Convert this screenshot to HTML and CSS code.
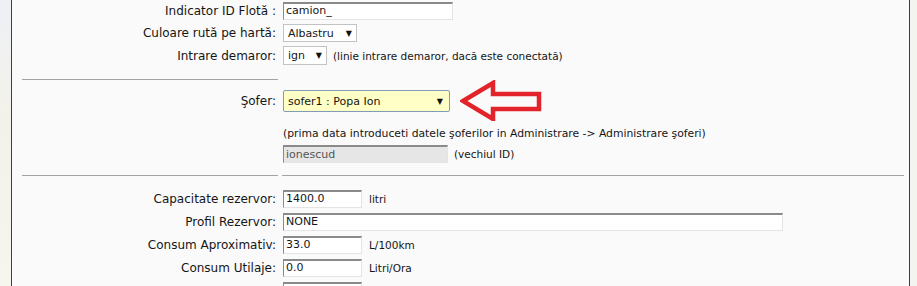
FILE: index.html
```html
<!DOCTYPE html>
<html lang="ro">
<head>
<meta charset="utf-8">
<title>Editare vehicul</title>
<link rel="stylesheet" href="styles.css">
</head>
<body>
<div class="side"></div>
<div class="frame">
  <div class="form">
    <div class="row r1">
      <div class="lbl">Indicator ID Flotă :</div>
      <div class="val"><input class="txt w-id" type="text" value="camion_"></div>
    </div>
    <div class="row r2">
      <div class="lbl">Culoare rută pe hartă:</div>
      <div class="val"><span class="sel w-color"><span class="opt">Albastru</span><span class="caret">▼</span></span></div>
    </div>
    <div class="row r3">
      <div class="lbl">Intrare demaror:</div>
      <div class="val"><span class="sel w-ign"><span class="opt">ign</span><span class="caret">▼</span></span><span class="note">(linie intrare demaror, dacă este conectată)</span></div>
    </div>

    <div class="sep sep-left"><hr class="rule"></div>

    <div class="row rsofer">
      <div class="lbl">Şofer:</div>
      <div class="val">
        <span class="sel sel-sofer"><span class="opt">sofer1 : Popa Ion</span><span class="caret">▼</span></span>
        <svg class="arrow" width="82" height="41" viewBox="0 0 82 41" aria-hidden="true">
          <path d="M3 21 L33 3 L33 14 L79 14 L79 29 L33 29 L33 39 Z" fill="none" stroke="#e2232a" stroke-width="4.5" stroke-linejoin="miter"/>
        </svg>
      </div>
    </div>
    <div class="row rhint">
      <div class="lbl"></div>
      <div class="val"><span class="hint">(prima data introduceti datele şoferilor in Administrare -&gt; Administrare şoferi)</span></div>
    </div>
    <div class="row rold">
      <div class="lbl"></div>
      <div class="val"><input class="txt txt-off w-old" type="text" value="ionescud" disabled><span class="note">(vechiul ID)</span></div>
    </div>

    <div class="sep sep-both"><hr class="rule"><hr class="rule"></div>

    <div class="row rq">
      <div class="lbl">Capacitate rezervor:</div>
      <div class="val"><input class="txt w-num" type="text" value="1400.0"><span class="unit">litri</span></div>
    </div>
    <div class="row rq">
      <div class="lbl">Profil Rezervor:</div>
      <div class="val"><input class="txt w-wide" type="text" value="NONE"></div>
    </div>
    <div class="row rq">
      <div class="lbl">Consum Aproximativ:</div>
      <div class="val"><input class="txt w-num" type="text" value="33.0"><span class="unit">L/100km</span></div>
    </div>
    <div class="row rq">
      <div class="lbl">Consum Utilaje:</div>
      <div class="val"><input class="txt w-num" type="text" value="0.0"><span class="unit">Litri/Ora</span></div>
    </div>
    <div class="row rq">
      <div class="lbl"></div>
      <div class="val"><input class="txt w-num" type="text" value=""></div>
    </div>
  </div>
</div>
</body>
</html>
```
FILE: styles.css
```css
* { box-sizing: border-box; }
html, body {
  margin: 0;
  padding: 0;
  height: 100%;
  overflow: hidden;
}
body {
  background: #f3f3ef;
  font-family: "DejaVu Sans", sans-serif;
  font-size: 10.5px;
  color: #151515;
  display: flex;
  align-items: stretch;
}
.side {
  width: 11px;
  flex: none;
  background: linear-gradient(180deg, #eef0f6 0%, #f3f2ea 40%, #f6f5ee 100%);
}
.frame {
  width: 899px;
  flex: none;
  background: #fafafa;
  border-left: 1px solid #3f3f3f;
  border-right: 1px solid #3f3f3f;
  padding: 0 5px 0 10px;
}
.form {
  display: flex;
  flex-direction: column;
}
.row {
  display: grid;
  grid-template-columns: 256px 1fr;
  column-gap: 4px;
  align-items: center;
}
.lbl {
  text-align: right;
  padding-right: 2px;
  white-space: nowrap;
  font-size: 12px;
}
.val {
  display: flex;
  align-items: center;
  white-space: nowrap;
  padding-left: 1px;
}
.r1 { height: 21px; }
.r2 { height: 22px; margin-top: 1px; }
.r3 { height: 23px; }
.rsofer { height: 24px; margin-top: 9px; }
.rhint { height: 18px; margin-top: 11px; }
.rold { height: 20px; margin-top: 2px; }
.rq { height: 23px; }
.sep {
  display: grid;
  grid-template-columns: 256px 1fr;
  column-gap: 4px;
  margin-top: 12px;
}
.sep-both { margin-top: 11px; margin-bottom: 11px; }
.rule {
  margin: 0;
  border: 0;
  height: 1px;
  background: #a2a2a2;
}
.txt {
  font-family: inherit;
  font-size: 11px;
  line-height: 13px;
  color: #151515;
  height: 18px;
  padding: 0 3px 1px 2px;
  background: #fff;
  border-style: solid;
  border-width: 2px 1px 1px 1px;
  border-color: #8a8a8a #e4e4e4 #e4e4e4 #8a8a8a;
  outline: none;
}
.txt-off {
  background: #e6e6e6;
  color: #555;
}
.w-id { width: 170px; }
.w-old { width: 165px; }
.w-num { width: 79px; }
.w-wide { width: 500px; }
.sel {
  display: inline-flex;
  align-items: center;
  justify-content: space-between;
  background: #fff;
  border: 1px solid #c3c3c3;
  padding: 0 4px 0 4px;
  font-size: 11px;
}
.w-color { width: 74px; height: 18px; }
.w-ign { width: 44px; height: 19px; }
.sel-sofer {
  width: 167px;
  height: 22px;
  background: #ffffc6;
  border-color: #7f9db9;
  border-radius: 2px;
  padding: 0 6px 0 4px;
}
.caret {
  font-size: 8px;
  color: #111;
}
.note { margin-left: 6px; }
.hint { font-size: 10.8px; }
.unit { margin-left: 7px; }
.arrow {
  margin: -10px 0 -9px 10px;
  flex: none;
}
```
